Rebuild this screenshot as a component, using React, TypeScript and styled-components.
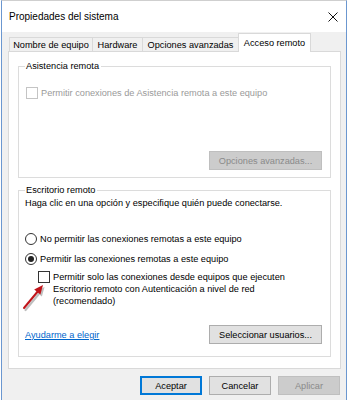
import { createGlobalStyle } from 'styled-components'
import styled from 'styled-components'

const GlobalStyle = createGlobalStyle`
  html, body {
    margin: 0;
    padding: 0;
    background: #ffffff;
  }
  body {
    font-family: "Liberation Sans", Arial, sans-serif;
    font-size: 9.2px;
    color: #000;
  }
`

const Frame = styled.div`
  position: relative;
  box-sizing: border-box;
  width: 346px;
  height: 400px;
  margin-left: 1px;
  border-left: 1px solid #6b97d0;
  border-right: 1px solid #6b97d0;
  border-top: 1px solid #cfcfcf;
  background: #f0f0f0;
  display: flex;
  flex-direction: column;
`

const TitleBar = styled.div`
  height: 31px;
  background: #ffffff;
  display: flex;
  align-items: center;
  justify-content: space-between;
  padding: 0 6px 0 7px;
  font-size: 10px;
`

const CloseButton = styled.div`
  width: 12px;
  height: 12px;
  display: flex;
  align-items: center;
  justify-content: center;
  margin-right: 1px;
`

const Body = styled.div`
  padding: 1px 6px 0 6px;
  display: flex;
  flex-direction: column;
`

const TabRow = styled.div`
  display: flex;
  align-items: flex-end;
  height: 18px;
  padding-left: 1px;
  position: relative;
  z-index: 1;
`

const Tab = styled.div<{ $w: number; $active?: boolean }>`
  box-sizing: border-box;
  width: ${p => p.$w}px;
  height: ${p => (p.$active ? 19 : 14)}px;
  margin-left: -1px;
  margin-bottom: ${p => (p.$active ? -1 : 0)}px;
  border: 1px solid #d9d9d9;
  border-bottom: none;
  background: ${p => (p.$active ? '#ffffff' : '#f0f0f0')};
  display: flex;
  align-items: center;
  justify-content: center;
  padding-top: ${p => (p.$active ? 0 : 1)}px;
  &:first-child { margin-left: 0; }
`

const Panel = styled.div`
  box-sizing: border-box;
  width: 333px;
  height: 318px;
  background: #ffffff;
  border: 1px solid #d9d9d9;
  padding: 8px 9px 0 9px;
  display: flex;
  flex-direction: column;
`

const Group = styled.fieldset<{ $gap?: number }>`
  margin: ${p => p.$gap ?? 0}px 0 0 0;
  padding: 0 8px 0 6px;
  border: 1px solid #dcdcdc;
  display: flex;
  flex-direction: column;
  min-width: 0;
`

const Legend = styled.legend`
  padding: 0 2px 0 1px;
  margin-left: 0;
  line-height: 12px;
  height: 12px;
`

const Row = styled.div<{ $top: number; $indent?: number }>`
  display: flex;
  align-items: flex-start;
  margin-top: ${p => p.$top}px;
  padding-left: ${p => p.$indent ?? 0}px;
  line-height: 12px;
`

const Text = styled.div<{ $disabled?: boolean; $top?: number }>`
  line-height: 12px;
  margin-top: ${p => p.$top ?? 0}px;
  color: ${p => (p.$disabled ? '#9a9a9a' : '#000')};
`

const Box = styled.span<{ $disabled?: boolean }>`
  box-sizing: border-box;
  flex: none;
  width: 12px;
  height: 12px;
  margin: 0 3px 0 1px;
  border: 1px solid ${p => (p.$disabled ? '#c4c4c4' : '#333333')};
  background: #ffffff;
`

const Radio = styled.span<{ $checked?: boolean }>`
  box-sizing: border-box;
  flex: none;
  width: 12px;
  height: 12px;
  margin: 0 3px 0 0;
  border: 1px solid #333333;
  border-radius: 50%;
  background: #ffffff;
  display: flex;
  align-items: center;
  justify-content: center;
  &::after {
    content: '';
    display: ${p => (p.$checked ? 'block' : 'none')};
    width: 6px;
    height: 6px;
    border-radius: 50%;
    background: #222222;
  }
`

const ActionRow = styled.div<{ $top: number; $bottom: number }>`
  display: flex;
  align-items: center;
  justify-content: space-between;
  margin-top: ${p => p.$top}px;
  margin-bottom: ${p => p.$bottom}px;
`

const Link = styled.a`
  color: #0066cc;
  text-decoration: underline;
  cursor: pointer;
`

const Button = styled.button<{ $w: number; $disabled?: boolean; $default?: boolean }>`
  box-sizing: border-box;
  width: ${p => p.$w}px;
  height: 19px;
  margin: 0;
  padding: 0;
  font-family: inherit;
  font-size: 9.2px;
  color: ${p => (p.$disabled ? '#8a8a8a' : '#000')};
  background: ${p => (p.$disabled ? '#cccccc' : '#e1e1e1')};
  border: 1px solid ${p => (p.$disabled ? '#bfbfbf' : p.$default ? '#0078d7' : '#adadad')};
  box-shadow: ${p => (p.$default ? 'inset 0 0 0 1px #0078d7' : 'none')};
`

const Footer = styled.div`
  display: flex;
  justify-content: flex-end;
  gap: 7px;
  margin-top: 7px;
`

const Arrow = styled.svg`
  position: absolute;
  left: 17px;
  top: 279px;
  overflow: visible;
`

const App = () => {
  return (
    <>
      <GlobalStyle />
      <Frame>
        <TitleBar>
          <span>Propiedades del sistema</span>
          <CloseButton>
            <svg width="10" height="10" viewBox="0 0 10 10">
              <path d="M0.5 0.5 L9.5 9.5 M9.5 0.5 L0.5 9.5" stroke="#111" strokeWidth="1" fill="none" />
            </svg>
          </CloseButton>
        </TitleBar>
        <Body>
          <TabRow>
            <Tab $w={84}>Nombre de equipo</Tab>
            <Tab $w={51}>Hardware</Tab>
            <Tab $w={97}>Opciones avanzadas</Tab>
            <Tab $w={73} $active>Acceso remoto</Tab>
          </TabRow>
          <Panel>
            <Group>
              <Legend>Asistencia remota</Legend>
              <Row $top={15}>
                <Box $disabled />
                <Text $disabled>Permitir conexiones de Asistencia remota a este equipo</Text>
              </Row>
              <ActionRow $top={52} $bottom={7}>
                <span />
                <Button $w={113} $disabled>Opciones avanzadas...</Button>
              </ActionRow>
            </Group>
            <Group $gap={6}>
              <Legend>Escritorio remoto</Legend>
              <Text $top={1}>Haga clic en una opción y especifique quién puede conectarse.</Text>
              <Row $top={24}>
                <Radio />
                <Text>No permitir las conexiones remotas a este equipo</Text>
              </Row>
              <Row $top={8}>
                <Radio $checked />
                <Text>Permitir las conexiones remotas a este equipo</Text>
              </Row>
              <Row $top={6} $indent={12}>
                <Box />
                <Text>
                  Permitir solo las conexiones desde equipos que ejecuten
                  <br />
                  Escritorio remoto con Autenticación a nivel de red
                  <br />
                  (recomendado)
                </Text>
              </Row>
              <ActionRow $top={18} $bottom={12}>
                <Link>Ayudarme a elegir</Link>
                <Button $w={113}>Seleccionar usuarios...</Button>
              </ActionRow>
            </Group>
          </Panel>
          <Footer>
            <Button $w={62} $default>Aceptar</Button>
            <Button $w={62}>Cancelar</Button>
            <Button $w={62} $disabled>Aplicar</Button>
          </Footer>
        </Body>
        <Arrow width="34" height="34" viewBox="0 0 34 34">
          <g opacity="0.25" transform="translate(1.5 2)">
            <path d="M5 28 L18.3 12" stroke="#000" strokeWidth="2.2" strokeLinecap="round" />
            <path d="M24 5 L21.4 14.5 L15.2 9.4 Z" fill="#000" />
          </g>
          <path d="M5 28 L18.3 12" stroke="#c0141a" strokeWidth="2" strokeLinecap="round" />
          <path d="M24 5 L21.4 14.5 L15.2 9.4 Z" fill="#c0141a" />
        </Arrow>
      </Frame>
    </>
  )
}

export default App
